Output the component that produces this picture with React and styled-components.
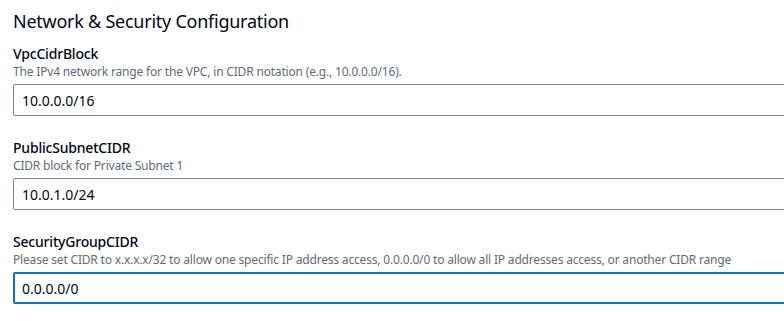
import React from 'react';
import styled, { createGlobalStyle } from 'styled-components';

const GlobalStyle = createGlobalStyle`
  body {
    margin: 0;
    background: #ffffff;
    font-family: "Noto Sans", "Open Sans", sans-serif;
    color: #000716;
    overflow: hidden;
  }
`;

const fields = [
  {
    name: 'VpcCidrBlock',
    hint: 'The IPv4 network range for the VPC, in CIDR notation (e.g., 10.0.0.0/16).',
    value: '10.0.0.0/16',
  },
  {
    name: 'PublicSubnetCIDR',
    hint: 'CIDR block for Private Subnet 1',
    value: '10.0.1.0/24',
  },
  {
    name: 'SecurityGroupCIDR',
    hint: 'Please set CIDR to x.x.x.x/32 to allow one specific IP address access, 0.0.0.0/0 to allow all IP addresses access, or another CIDR range',
    value: '0.0.0.0/0',
    focused: true,
  },
];

const App = () => {
  return (
    <>
      <GlobalStyle />
      <Panel>
        <Title>Network &amp; Security Configuration</Title>
        <FieldList>
          {fields.map((f) => (
            <Field key={f.name}>
              <Label>{f.name}</Label>
              <Hint>{f.hint}</Hint>
              <Input defaultValue={f.value} $focused={f.focused} />
            </Field>
          ))}
        </FieldList>
      </Panel>
    </>
  );
};

export default App;

const Panel = styled.div`
  width: 820px;
  padding: 8px 0 0 13px;
`;

const Title = styled.h2`
  margin: 0;
  font-size: 18px;
  font-weight: 400;
  line-height: 26px;
  letter-spacing: -0.25px;
`;

const FieldList = styled.div`
  display: flex;
  flex-direction: column;
  gap: 22px;
  margin-top: 10px;
`;

const Field = styled.div`
  display: flex;
  flex-direction: column;
`;

const Label = styled.div`
  font-size: 14px;
  font-weight: 500;
  line-height: 20px;
  letter-spacing: -0.2px;
`;

const Hint = styled.div`
  font-size: 12px;
  line-height: 16px;
  color: #5f6b7a;
  margin-bottom: 4px;
  white-space: nowrap;
  letter-spacing: -0.18px;
`;

const Input = styled.input`
  box-sizing: border-box;
  width: 100%;
  height: 32px;
  padding: 0 ${(p) => (p.$focused ? '7px' : '8px')};
  font-family: inherit;
  font-size: 14px;
  color: #000716;
  background: #ffffff;
  border: ${(p) => (p.$focused ? '2px solid #0972d3' : '1px solid #7d8998')};
  border-radius: 2px;
  outline: none;
`;
